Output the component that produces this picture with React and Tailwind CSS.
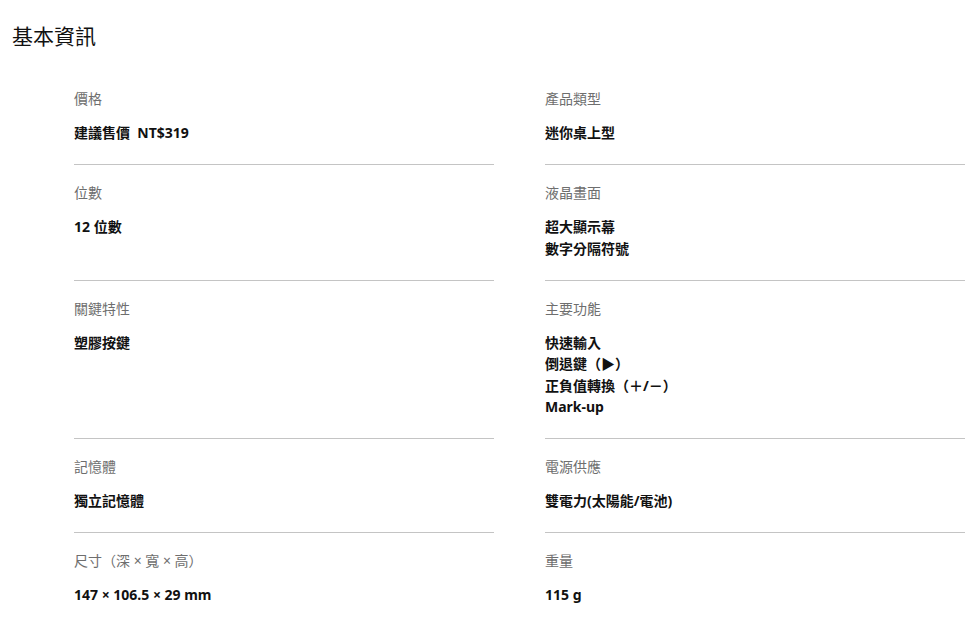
import React from "react";

const rows = [
  [
    { label: "價格", values: ["建議售價  NT$319"] },
    { label: "產品類型", values: ["迷你桌上型"] },
  ],
  [
    { label: "位數", values: ["12 位數"] },
    { label: "液晶畫面", values: ["超大顯示幕", "數字分隔符號"] },
  ],
  [
    { label: "關鍵特性", values: ["塑膠按鍵"] },
    { label: "主要功能", values: ["快速輸入", "倒退鍵（▶）", "正負值轉換（＋/－）", "Mark-up"] },
  ],
  [
    { label: "記憶體", values: ["獨立記憶體"] },
    { label: "電源供應", values: ["雙電力(太陽能/電池)"] },
  ],
  [
    { label: "尺寸（深 × 寬 × 高）", values: ["147 × 106.5 × 29 mm"] },
    { label: "重量", values: ["115 g"] },
  ],
];

function Cell({ item, last }) {
  return (
    <div className={`pt-[18px] pb-[20.5px] ${last ? "" : "border-b border-[#c4c4c4]"}`}>
      <div className="text-[14px] leading-[20px] text-[#6e6e6e]">{item.label}</div>
      <div className="mt-[13px] text-[14px] leading-[21.5px] font-bold text-[#111] whitespace-pre">
        {item.values.map((v, i) => (
          <div key={i}>{v}</div>
        ))}
      </div>
    </div>
  );
}

export default function App() {
  return (
    <div
      className="bg-white min-h-screen"
      style={{ fontFamily: '"Noto Sans", "Noto Sans CJK TC", sans-serif' }}
    >
      <h2 className="pl-[12px] pt-[22px] text-[21px] leading-[28px] text-[#111] font-normal">
        基本資訊
      </h2>
      <div className="mt-[21px] pl-[74px] grid grid-cols-2 gap-x-[51px]">
        {rows.map((r, ri) =>
          r.map((item, ci) => (
            <Cell key={`${ri}-${ci}`} item={item} last={ri === rows.length - 1} />
          ))
        )}
      </div>
    </div>
  );
}
